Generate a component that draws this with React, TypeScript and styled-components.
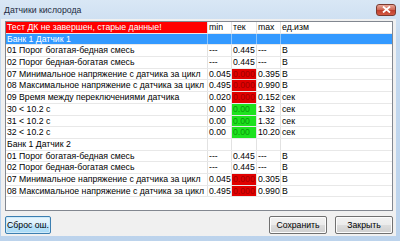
import React from 'react';
import styled, { createGlobalStyle } from 'styled-components';

const GlobalStyle = createGlobalStyle`
  html, body { margin: 0; padding: 0; width: 400px; height: 241px; overflow: hidden; background: #c3d7ee; }
  body { font-family: "Liberation Sans", Arial, sans-serif; font-size: 9px; }
  * { box-sizing: border-box; }
`;

const Window = styled.div`
  width: 400px;
  height: 241px;
  display: flex;
  flex-direction: column;
  background: linear-gradient(#d9e7f5, #c4d9ef 40px, #bcd3ec);
  padding: 0 4px 5px 1px;
`;

const TitleBar = styled.div`
  height: 19px;
  display: flex;
  align-items: center;
  justify-content: space-between;
  padding-left: 3px;
`;

const Title = styled.span`
  font-size: 8.7px;
  color: #1b2a3d;
`;

const CloseButton = styled.div`
  width: 20px;
  height: 12px;
  border: 1px solid #7a3a30;
  border-radius: 3px;
  background: linear-gradient(#e9a899, #d06a58 45%, #c0402e 55%, #d45a44);
  display: flex;
  align-items: center;
  justify-content: center;
`;

const Panel = styled.div`
  flex: 1;
  background: #f0f0f0;
  display: flex;
  flex-direction: column;
  padding: 2px 3px 2px 4px;
`;

const Grid = styled.div`
  height: 190px;
  border: 1px solid #828790;
  background: #fff;
  overflow: hidden;
`;

const Row = styled.div<{ $selected?: boolean }>`
  display: grid;
  grid-template-columns: 202px 24px 25px 24px 1fr;
  height: 11.7px;
  border-bottom: 1px solid #e8e8e8;
  background: ${(p) => (p.$selected ? '#3399ff' : '#fff')};
  color: ${(p) => (p.$selected ? '#fff' : '#000')};
`;

type Tone = 'alarm' | 'ok' | 'header' | undefined;

const Cell = styled.div<{ $tone?: Tone; $selected?: boolean }>`
  font-size: 8.7px;
  line-height: 11px;
  padding-left: 1px;
  white-space: nowrap;
  overflow: hidden;
  border-right: 1px solid ${(p) => (p.$selected ? '#8cc4fb' : '#e2e2e2')};
  background: ${(p) =>
    p.$tone === 'alarm' ? '#e00000' : p.$tone === 'ok' ? '#1ee21e' : p.$tone === 'header' ? '#ff0000' : 'transparent'};
  color: ${(p) =>
    p.$tone === 'alarm' ? '#a00000' : p.$tone === 'ok' ? '#0a960a' : p.$tone === 'header' ? '#fff' : 'inherit'};
  &:last-child { border-right: none; }
`;

const ButtonBar = styled.div`
  display: flex;
  align-items: center;
  margin-top: 5px;
  height: 18px;
  gap: 8px;
`;

const Button = styled.button<{ $w: number; $focused?: boolean }>`
  width: ${(p) => p.$w}px;
  height: 18px;
  padding: 0;
  font-family: "Liberation Sans", Arial, sans-serif;
  font-size: 8.7px;
  color: #000;
  border-radius: 2px;
  border: 1px solid ${(p) => (p.$focused ? '#3c7fb1' : '#707070')};
  background: ${(p) =>
    p.$focused
      ? 'linear-gradient(#eaf6fd, #d9f0fc 50%, #bee6fd 50%, #a7d9f5)'
      : 'linear-gradient(#f2f2f2, #ebebeb 50%, #dddddd 50%, #cfcfcf)'};
  box-shadow: inset 0 0 0 1px ${(p) => (p.$focused ? '#cfeaf9' : '#fcfcfc')};
`;

const Spacer = styled.div`
  flex: 1;
`;

type Data = {
  name: string;
  min?: string;
  cur?: string;
  max?: string;
  unit?: string;
  tone?: Tone;
  selected?: boolean;
};

const rows: Data[] = [
  { name: 'Банк 1 Датчик 1', selected: true },
  { name: '01 Порог богатая-бедная смесь', min: '---', cur: '0.445', max: '---', unit: 'В' },
  { name: '02 Порог бедная-богатая смесь', min: '---', cur: '0.445', max: '---', unit: 'В' },
  { name: '07 Минимальное напряжение с датчика за цикл', min: '0.045', cur: '0.000', max: '0.395', unit: 'В', tone: 'alarm' },
  { name: '08 Максимальное напряжение с датчика за цикл', min: '0.495', cur: '0.000', max: '0.990', unit: 'В', tone: 'alarm' },
  { name: '09 Время между переключениями датчика', min: '0.020', cur: '0.000', max: '0.152', unit: 'сек', tone: 'alarm' },
  { name: '30 < 10.2 c', min: '0.00', cur: '0.00', max: '1.32', unit: 'сек', tone: 'ok' },
  { name: '31 < 10.2 c', min: '0.00', cur: '0.00', max: '1.32', unit: 'сек', tone: 'ok' },
  { name: '32 < 10.2 c', min: '0.00', cur: '0.00', max: '10.20', unit: 'сек', tone: 'ok' },
  { name: 'Банк 1 Датчик 2' },
  { name: '01 Порог богатая-бедная смесь', min: '---', cur: '0.445', max: '---', unit: 'В' },
  { name: '02 Порог бедная-богатая смесь', min: '---', cur: '0.445', max: '---', unit: 'В' },
  { name: '07 Минимальное напряжение с датчика за цикл', min: '0.045', cur: '0.000', max: '0.305', unit: 'В', tone: 'alarm' },
  { name: '08 Максимальное напряжение с датчика за цикл', min: '0.495', cur: '0.000', max: '0.990', unit: 'В', tone: 'alarm' },
];

export default function App() {
  return (
    <>
      <GlobalStyle />
      <Window>
        <TitleBar>
          <Title>Датчики кислорода</Title>
          <CloseButton>
            <svg width="9" height="7" viewBox="0 0 9 7">
              <path d="M1 0.5 L8 6.5 M8 0.5 L1 6.5" stroke="#fff" strokeWidth="1.8" />
            </svg>
          </CloseButton>
        </TitleBar>
        <Panel>
          <Grid>
            <Row>
              <Cell $tone="header">Тест ДК не завершен, старые данные!</Cell>
              <Cell>min</Cell>
              <Cell>тек</Cell>
              <Cell>max</Cell>
              <Cell>ед.изм</Cell>
            </Row>
            {rows.map((r, i) => (
              <Row key={i} $selected={r.selected}>
                <Cell $selected={r.selected}>{r.name}</Cell>
                <Cell $selected={r.selected}>{r.min}</Cell>
                <Cell $selected={r.selected} $tone={r.tone}>{r.cur}</Cell>
                <Cell $selected={r.selected}>{r.max}</Cell>
                <Cell $selected={r.selected}>{r.unit}</Cell>
              </Row>
            ))}
          </Grid>
          <ButtonBar>
            <Button $w={46} $focused>Сброс ош.</Button>
            <Spacer />
            <Button $w={58}>Сохранить</Button>
            <Button $w={58}>Закрыть</Button>
          </ButtonBar>
        </Panel>
      </Window>
    </>
  );
}
